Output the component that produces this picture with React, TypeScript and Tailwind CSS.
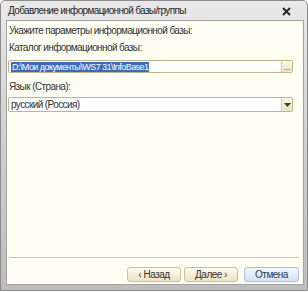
import React from "react";

const font = { fontFamily: '"Liberation Sans", Arial, sans-serif' };

export default function App() {
  return (
    <div
      className="w-[308px] h-[292px] bg-white"
      style={font}
    >
      <div className="w-[308px] h-[291px] flex flex-col border border-[#8c8c8c] rounded-t-[5px] bg-gradient-to-b from-[#e9e9e9] via-[#cfcfcf] to-[#bdbdbd]">
        <div className="h-[19px] flex items-center pl-[7px] pr-[16px] shrink-0">
          <span className="flex-1 text-[10px] tracking-[-0.65px] text-[#262626] leading-none">
            Добавление информационной базы/группы
          </span>
          <svg width="9" height="9" viewBox="0 0 9 9" className="mt-[1px]">
            <path d="M1 1L8 8M8 1L1 8" stroke="#2a2a2a" strokeWidth="2" />
          </svg>
        </div>
        <div className="flex-1 ml-[5px] mr-[3px] mb-[5px] border border-[#a3a3a3] bg-[#fffef2] flex flex-col px-[1px] pt-[3px] pb-[2px] text-[10px] tracking-[-0.6px] text-[#333]">
          <div className="h-[13px] leading-[13px] pl-[1px]">Укажите параметры информационной базы:</div>
          <div className="h-[13px] leading-[13px] mt-[4px] pl-[1px]">Каталог информационной базы:</div>
          <div className="mt-[6px] h-[13px] w-[285px] flex border border-[#c2b483] rounded-[2px] bg-white overflow-hidden">
            <div className="flex-1 flex items-center pl-[2px]">
              <span className="bg-[#3a6bc4] text-white leading-[10px] h-[10px] text-[9px] tracking-[-0.55px] px-[1px]">
                D:\Мои документы\WS7 31\InfoBase1
              </span>
            </div>
            <div className="w-[11px] border-l border-[#d6cba6] bg-gradient-to-b from-[#fbf8e8] to-[#ebe3c4] flex items-end justify-center text-[8px] tracking-normal leading-[9px] text-[#333]">
              ...
            </div>
          </div>
          <div className="h-[13px] leading-[13px] mt-[7px] pl-[1px]">Язык (Страна):</div>
          <div className="mt-[4px] h-[15px] w-[285px] flex border border-[#c2b483] rounded-[2px] bg-white overflow-hidden">
            <div className="flex-1 flex items-center pl-[2px] leading-none">русский (Россия)</div>
            <div className="w-[11px] border-l border-[#d6cba6] bg-gradient-to-b from-[#fbf8e8] to-[#ebe3c4] flex items-center justify-center">
              <svg width="7" height="4" viewBox="0 0 7 4">
                <path d="M0 0H7L3.5 4Z" fill="#4b3b12" />
              </svg>
            </div>
          </div>
          <div className="flex-1" />
          <div className="h-[2px] mx-[1px] border-t border-[#cfc6a6] border-b border-b-white w-[290px]" />
          <div className="mt-[8px] flex justify-end pr-[3px] text-[10px] tracking-[-0.5px]">
            <button className="w-[54px] h-[15px] rounded-[3px] border border-[#cdbf95] bg-gradient-to-b from-[#fdfbee] to-[#ece4c4] text-[#333] leading-none flex items-center justify-center">
              ‹ Назад
            </button>
            <button className="ml-[3px] w-[54px] h-[15px] rounded-[3px] border border-[#cdbf95] bg-gradient-to-b from-[#fdfbee] to-[#ece4c4] text-[#333] leading-none flex items-center justify-center">
              Далее ›
            </button>
            <button className="ml-[6px] w-[55px] h-[15px] rounded-[3px] border border-[#a9c0e4] bg-gradient-to-b from-[#f1f6fe] to-[#d4e3f9] text-[#2b3a55] leading-none flex items-center justify-center">
              Отмена
            </button>
          </div>
        </div>
      </div>
    </div>
  );
}
